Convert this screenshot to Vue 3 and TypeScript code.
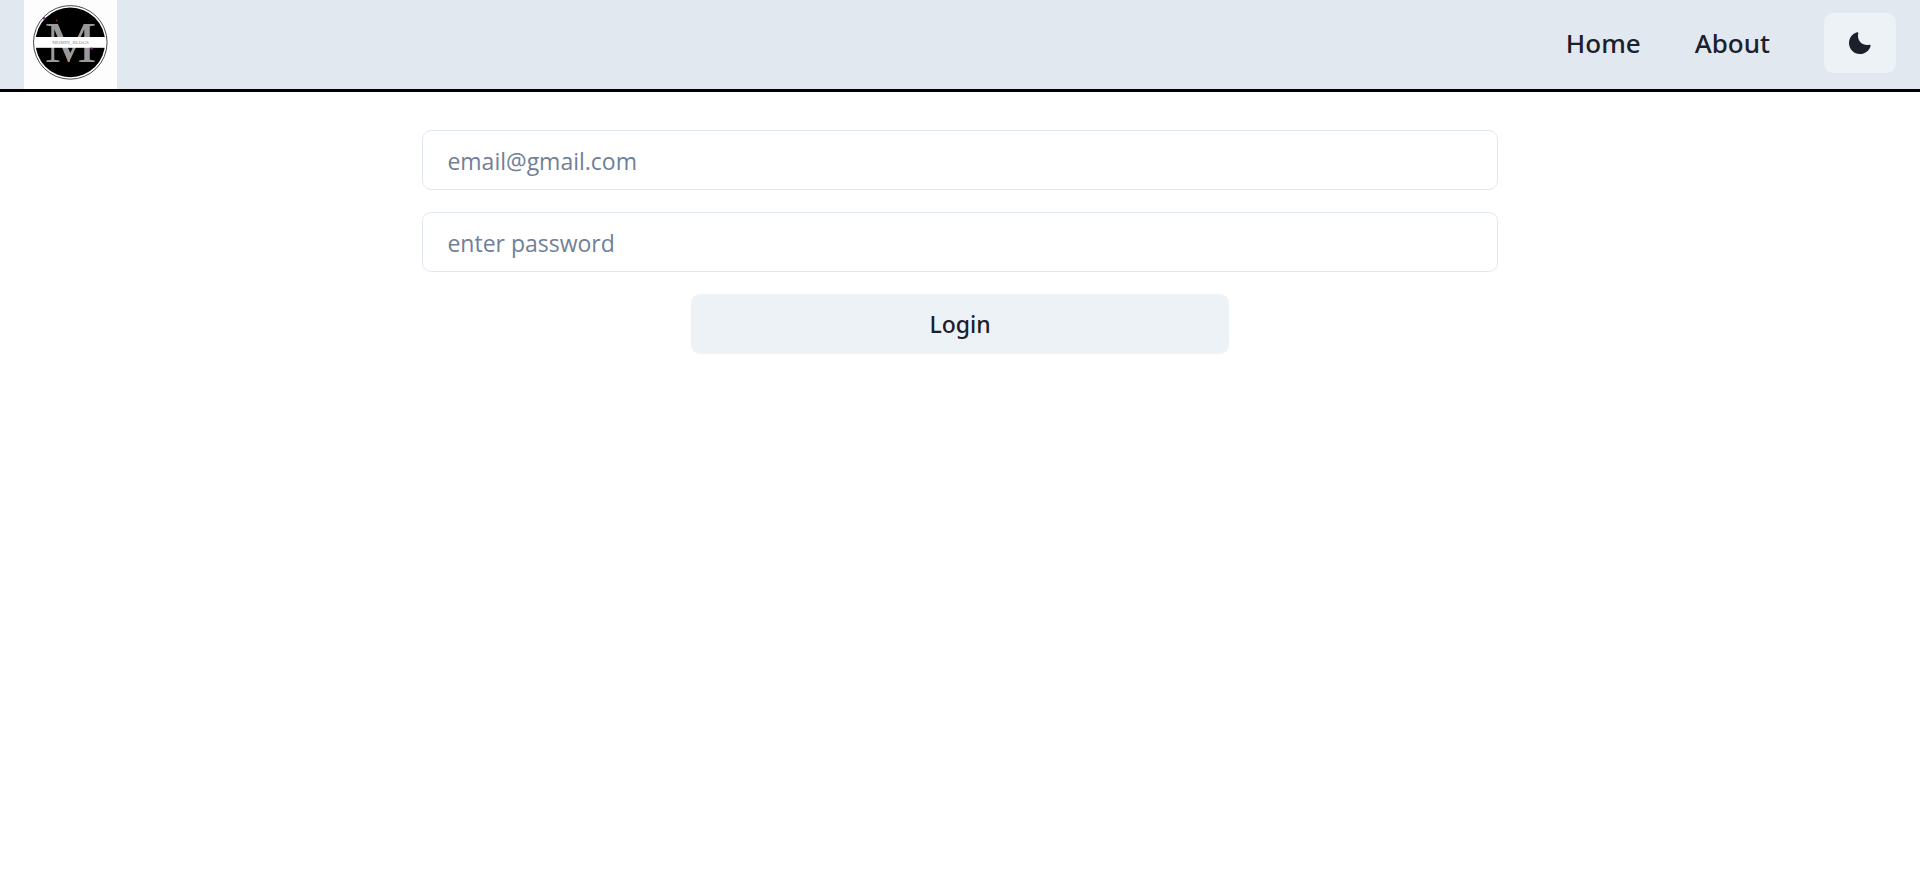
<script setup lang="ts">
import { ref } from 'vue'

interface NavLink {
  label: string
  href: string
}

const links: NavLink[] = [
  { label: 'Home', href: '#home' },
  { label: 'About', href: '#about' },
]

const email = ref<string>('')
const password = ref<string>('')
</script>

<template>
  <div class="page">
    <header class="navbar">
      <a class="brand" href="#home" aria-label="Momin Blogs">
        <svg class="logo" viewBox="0 0 93 89" aria-hidden="true">
          <rect width="93" height="89" fill="#fdfdfd" />
          <circle cx="46.3" cy="42.4" r="36.8" fill="#fff" stroke="#333" stroke-width="0.9" />
          <circle cx="46.3" cy="42.4" r="34.8" fill="#000" />
          <text class="monogram" x="46.5" y="62" text-anchor="middle">M</text>
          <rect x="11" y="37" width="71" height="10.8" fill="#fff" />
          <text class="wordmark" x="46.5" y="44.2" text-anchor="middle">MOMIN_BLOGS</text>
          <circle cx="20.2" cy="18.4" r="1.3" fill="#8a2a86" />
          <circle cx="32.6" cy="20.5" r="0.7" fill="#a8324f" />
          <circle cx="67.6" cy="48.6" r="1.2" fill="#7c2878" />
          <circle cx="44.8" cy="60.8" r="1.2" fill="#d9834a" />
        </svg>
      </a>
      <nav class="menu">
        <a v-for="link in links" :key="link.label" class="link" :href="link.href">{{ link.label }}</a>
        <button class="mode" type="button" aria-label="Toggle color mode">
          <svg class="moon" viewBox="0 0 24 24" aria-hidden="true">
            <path
              fill="currentColor"
              d="M21.4,13.7C20.6,13.9,19.8,14,19,14c-5,0-9-4-9-9c0-0.8,0.1-1.6,0.3-2.4c0.1-0.3,0-0.7-0.3-1c-0.3-0.3-0.6-0.4-1-0.3C4.3,2.7,1,7.1,1,12c0,6.1,4.9,11,11,11c4.9,0,9.3-3.3,10.6-8.1c0.1-0.3,0-0.7-0.3-1C22.1,13.7,21.7,13.6,21.4,13.7z"
            />
          </svg>
        </button>
      </nav>
    </header>
    <main>
      <form class="login" @submit.prevent>
        <input v-model="email" class="field" type="email" placeholder="email@gmail.com" aria-label="Email" />
        <input v-model="password" class="field" type="password" placeholder="enter password" aria-label="Password" />
        <button class="submit" type="submit">Login</button>
      </form>
    </main>
  </div>
</template>

<style>
body {
  background: #fff;
}
</style>

<style scoped>
.page {
  color: #1a202c;
  font-family: "Segoe UI", "Noto Sans", "Open Sans", sans-serif;
}

.navbar {
  display: flex;
  align-items: center;
  justify-content: space-between;
  padding: 0 24px;
  background: #e2e8f0;
  border-bottom: 3px solid #000;
}

.brand,
.logo {
  display: block;
}

.logo {
  width: 93px;
  height: 89px;
}

.monogram {
  font-family: "Liberation Serif", serif;
  font-size: 58px;
  fill: #999;
}

.wordmark {
  font-family: "Liberation Serif", serif;
  font-size: 5px;
  fill: #888;
}

.menu {
  display: flex;
  align-items: center;
  gap: 54px;
  padding-bottom: 3px;
}

.link {
  color: inherit;
  font-size: 26px;
  font-weight: 500;
  line-height: 40px;
  text-decoration: none;
}

.mode {
  display: flex;
  align-items: center;
  justify-content: center;
  width: 72px;
  height: 60px;
  padding: 0;
  border: 0;
  border-radius: 9px;
  background: #edf2f7;
  color: inherit;
  cursor: pointer;
}

.moon {
  width: 24px;
  height: 24px;
}

.login {
  display: flex;
  flex-direction: column;
  gap: 22px;
  width: 56%;
  margin: 38px auto 0;
}

.field {
  box-sizing: border-box;
  width: 100%;
  height: 60px;
  padding: 2px 24px 0;
  border: 1px solid #e2e8f0;
  border-radius: 9px;
  background: #fff;
  color: inherit;
  font-family: "Segoe UI", "Open Sans", "Noto Sans", sans-serif;
  font-size: 23px;
}

.field::placeholder {
  color: #718096;
  opacity: 1;
}

.submit {
  align-self: center;
  width: 50%;
  height: 60px;
  padding: 0;
  border: 0;
  border-radius: 9px;
  background: #edf2f7;
  color: inherit;
  font-family: inherit;
  font-size: 23px;
  font-weight: 500;
  cursor: pointer;
}
</style>
